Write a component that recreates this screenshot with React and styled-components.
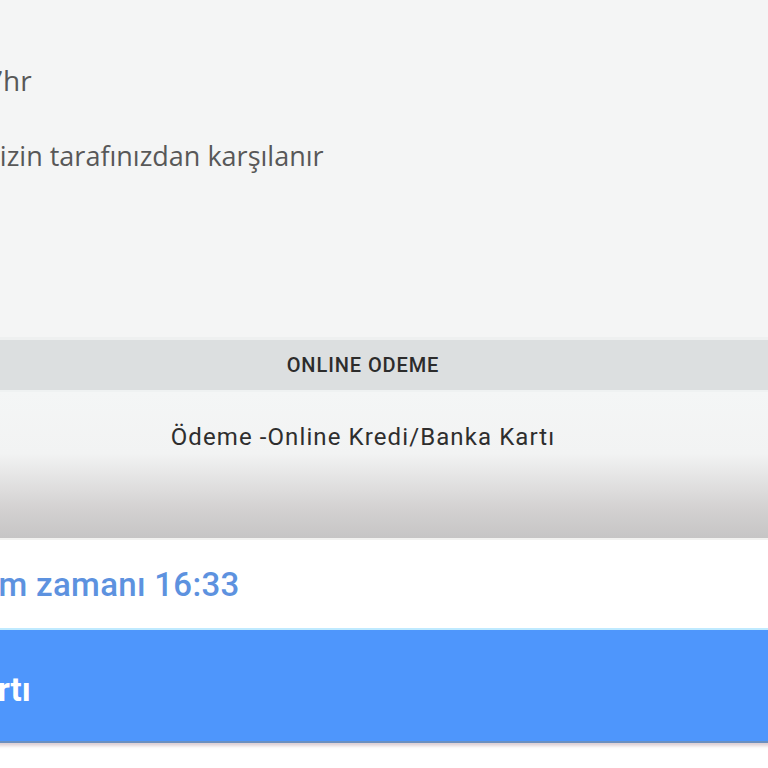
import React from "react";
import styled, { createGlobalStyle } from "styled-components";

const GlobalStyle = createGlobalStyle`
  html, body {
    margin: 0;
    padding: 0;
    background: #ffffff;
    overflow: hidden;
  }
`;

// the screenshot is a crop of a wider page, so the page sits a bit left of the window
const Page = styled.div`
  width: 896px;
  margin-left: -85px;
  display: flex;
  flex-direction: column;
`;

const InfoPanel = styled.div`
  height: 337px;
  background: #f4f5f5;
  padding: 62px 0 0 72px;
  box-sizing: border-box;
  font-family: "Open Sans", "DejaVu Sans", sans-serif;
  color: #585858;
`;

const InfoLine = styled.div`
  font-size: ${(p) => p.size}px;
  line-height: 1.3;
  margin-bottom: ${(p) => p.gap || 0}px;
  white-space: nowrap;
`;

const SectionHeader = styled.div`
  height: 50px;
  border-top: 3px solid #eef0f0;
  background: #dcdfe0;
  display: flex;
  align-items: center;
  justify-content: center;
  font-family: "Roboto", "Liberation Sans", sans-serif;
  font-weight: 500;
  font-size: 20px;
  letter-spacing: 0.9px;
  color: #2c2c2c;
`;

const PaymentBody = styled.div`
  height: 148px;
  border-top: 2px solid #eff2f2;
  background: linear-gradient(to bottom, #f4f6f6 0%, #f2f3f3 42%, #d3d1d1 80%, #c6c5c5 100%);
  display: flex;
  justify-content: center;
  padding-top: 31px;
  box-sizing: border-box;
  font-family: "Roboto", "Liberation Sans", sans-serif;
  font-size: 24px;
  letter-spacing: 1.1px;
  color: #2e2e2e;
`;

const DeliveryRow = styled.div`
  height: 88px;
  border-top: 2px solid #f2f2f0;
  background: #ffffff;
  display: flex;
  align-items: center;
  padding-left: 12px;
  font-family: "Roboto", "Liberation Sans", sans-serif;
  font-weight: 500;
  font-size: 33px;
  letter-spacing: 0.3px;
  color: #5d92df;
  white-space: nowrap;
`;

const PayButton = styled.div`
  height: 113px;
  border-top: 2px solid #bfeaff;
  background: #4e96fc;
  display: flex;
  align-items: center;
  padding: 7px 0 0 44px;
  box-sizing: border-box;
  font-family: "Roboto", "Liberation Sans", sans-serif;
  font-weight: 700;
  font-size: 33px;
  color: #ffffff;
  white-space: nowrap;
  box-shadow: 0 2px 0 #6a8fc0, 0 5px 3px rgba(180, 150, 160, 0.45);
`;

const BottomSpace = styled.div`
  height: 40px;
`;

export default function App() {
  return (
    <>
      <GlobalStyle />
      <Page>
        <InfoPanel>
          <InfoLine size={28} gap={40}>7hr</InfoLine>
          <InfoLine size={27}>sizin tarafınızdan karşılanır</InfoLine>
        </InfoPanel>
        <SectionHeader>ONLINE ODEME</SectionHeader>
        <PaymentBody>Ödeme -Online Kredi/Banka Kartı</PaymentBody>
        <DeliveryRow>Teslim zamanı 16:33</DeliveryRow>
        <PayButton>Kartı</PayButton>
        <BottomSpace />
      </Page>
    </>
  );
}
